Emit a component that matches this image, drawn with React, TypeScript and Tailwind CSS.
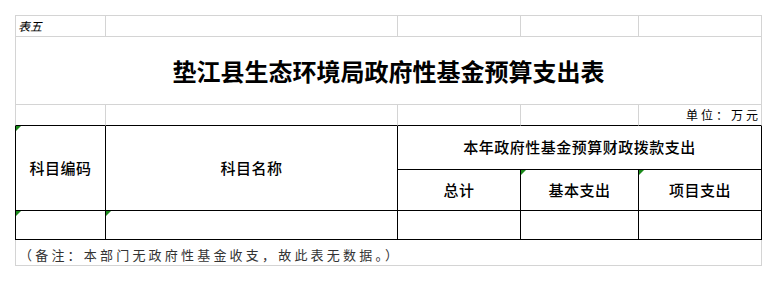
import React from "react";

const gray = "border-[#d4d4d4]";
const black = "border-black";

function Corner() {
  return (
    <span className="absolute left-0 top-0 h-0 w-0 border-t-[5px] border-r-[5px] border-t-[#1a8a1a] border-r-transparent" />
  );
}

export default function App() {
  return (
    <div className="min-h-[281px] w-[777px] bg-white pl-[15px] pt-[15px] font-['Noto_Sans_CJK_SC',sans-serif] text-black">
      <div className="grid grid-cols-[91px_292px_123px_118px_123px] grid-rows-[22px_68px_21px_44px_41px_29px_26px]">
        {/* row 1 */}
        <div className={`flex items-center border-l border-t border-r border-b pl-[2px] text-[12px] italic ${gray}`}>
          表五
        </div>
        <div className={`border-t border-r border-b ${gray}`} />
        <div className={`border-t border-r border-b ${gray}`} />
        <div className={`border-t border-r border-b ${gray}`} />
        <div className={`border-t border-r border-b ${gray}`} />

        {/* row 2: title */}
        <div className={`col-span-5 flex items-center justify-center border-l border-r border-b text-[24px] font-bold ${gray}`}>
          垫江县生态环境局政府性基金预算支出表
        </div>

        {/* row 3: unit */}
        <div className="border-l border-r border-b border-l-[#d4d4d4] border-r-[#d4d4d4] border-b-black" />
        <div className="border-r border-b border-r-[#d4d4d4] border-b-black" />
        <div className="border-r border-b border-r-[#d4d4d4] border-b-black" />
        <div className="border-r border-b border-r-[#d4d4d4] border-b-black" />
        <div className="flex items-center justify-end border-r border-b border-r-[#d4d4d4] border-b-black text-[12px] tracking-[3px]">
          单位：万元
        </div>

        {/* rows 4-5: header */}
        <div className={`relative row-span-2 flex items-center justify-center border-l border-r border-b text-[15px] font-medium tracking-[0.5px] ${black}`}>
          <Corner />
          科目编码
        </div>
        <div className={`row-span-2 flex items-center justify-center border-r border-b text-[15px] font-medium tracking-[0.5px] ${black}`}>
          科目名称
        </div>
        <div className={`col-span-3 flex items-center justify-center border-r border-b text-[15px] font-medium tracking-[0.5px] ${black}`}>
          本年政府性基金预算财政拨款支出
        </div>
        <div className={`flex items-center justify-center border-r border-b text-[15px] font-medium tracking-[0.5px] ${black}`}>
          总计
        </div>
        <div className={`relative flex items-center justify-center border-r border-b text-[15px] font-medium tracking-[0.5px] ${black}`}>
          <Corner />
          基本支出
        </div>
        <div className={`relative flex items-center justify-center border-r border-b text-[15px] font-medium tracking-[0.5px] ${black}`}>
          <Corner />
          项目支出
        </div>

        {/* row 6: empty data row */}
        <div className={`relative border-l border-r border-b ${black}`}>
          <Corner />
        </div>
        <div className={`relative border-r border-b ${black}`}>
          <Corner />
        </div>
        <div className={`border-r border-b ${black}`} />
        <div className={`border-r border-b ${black}`} />
        <div className={`border-r border-b ${black}`} />

        {/* row 7: note */}
        <div className={`col-span-5 flex items-center border-l border-r border-b pl-[3px] pt-[4px] text-[13px] tracking-[3.2px] text-[#333] ${gray}`}>
          （备注：本部门无政府性基金收支，故此表无数据。）
        </div>
      </div>
    </div>
  );
}
